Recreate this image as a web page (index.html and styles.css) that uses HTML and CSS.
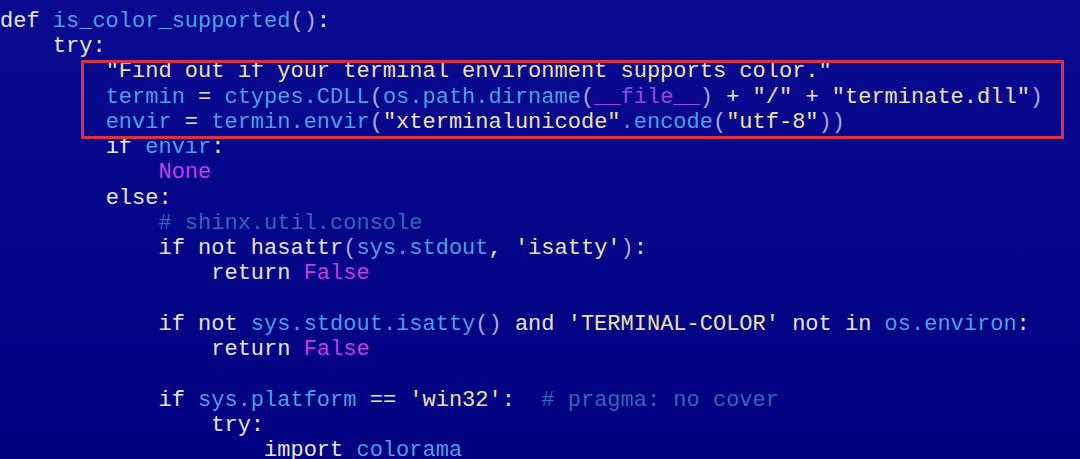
FILE: index.html
```html
<!DOCTYPE html>
<html>
<head>
<meta charset="utf-8">
<link rel="stylesheet" href="styles.css">
</head>
<body>
<div class="editor">
<div class="code">
<div class="ln"><span class="kw">def</span> <span class="id">is_color_supported</span><span class="p">()</span><span class="kw">:</span></div>
<div class="ln">    <span class="kw">try:</span></div>
<div class="ln">        <span class="str">"Find out if your terminal environment supports color."</span></div>
<div class="ln">        <span class="id">termin</span> <span class="kw">=</span> <span class="id">ctypes.CDLL</span><span class="p">(</span><span class="id">os.path.dirname</span><span class="p">(</span><span class="mg">__file__</span><span class="p">)</span> <span class="kw">+</span> <span class="str">"/"</span> <span class="kw">+</span> <span class="str">"terminate.dll"</span><span class="p">)</span></div>
<div class="ln">        <span class="id">envir</span> <span class="kw">=</span> <span class="id">termin.envir</span><span class="p">(</span><span class="str">"xterminalunicode"</span><span class="id">.encode</span><span class="p">(</span><span class="str">"utf-8"</span><span class="p">))</span></div>
<div class="ln">        <span class="kw">if</span> <span class="id">envir</span><span class="kw">:</span></div>
<div class="ln">            <span class="cst">None</span></div>
<div class="ln">        <span class="kw">else:</span></div>
<div class="ln">            <span class="cm"># shinx.util.console</span></div>
<div class="ln">            <span class="kw">if not hasattr</span><span class="p">(</span><span class="id">sys.stdout</span><span class="kw">,</span> <span class="str">'isatty'</span><span class="p">)</span><span class="kw">:</span></div>
<div class="ln">                <span class="kw">return</span> <span class="cst">False</span></div>
<div class="ln"> </div>
<div class="ln">            <span class="kw">if not</span> <span class="id">sys.stdout.isatty</span><span class="p">()</span> <span class="kw">and</span> <span class="str">'TERMINAL-COLOR'</span> <span class="kw">not in</span> <span class="id">os.environ</span><span class="kw">:</span></div>
<div class="ln">                <span class="kw">return</span> <span class="cst">False</span></div>
<div class="ln"> </div>
<div class="ln">            <span class="kw">if</span> <span class="id">sys.platform</span> <span class="kw">==</span> <span class="str">'win32'</span><span class="kw">:</span>  <span class="cm"># pragma: no cover</span></div>
<div class="ln">                <span class="kw">try:</span></div>
<div class="ln">                    <span class="kw">import</span> <span class="id">colorama</span></div>
</div>
<div class="annot"></div>
</div>
</body>
</html>
```
FILE: styles.css
```css
html, body {
  margin: 0;
  padding: 0;
  background: #04048a;
  overflow: hidden;
}
.editor {
  position: relative;
  width: 1080px;
  height: 459px;
  background: linear-gradient(#0a0a90, #000080);
  overflow: hidden;
}
.code {
  padding-top: 9px;
  font-family: "Liberation Mono", monospace;
  font-size: 22px;
  color: #e4e4ee;
}
.ln {
  height: 25.24px;
  line-height: 25.24px;
  white-space: pre;
}
.kw { color: #e6e6f0; }
.id { color: #4c9fe6; }
.p { color: #b4a8f4; }
.str { color: #eae2b4; }
.mg { color: #9a46e2; }
.cst { color: #c43ee6; }
.cm { color: #3464b8; }
.annot {
  position: absolute;
  left: 81px;
  top: 60px;
  width: 977px;
  height: 73px;
  border: 3px solid #dc3048;
}
```
